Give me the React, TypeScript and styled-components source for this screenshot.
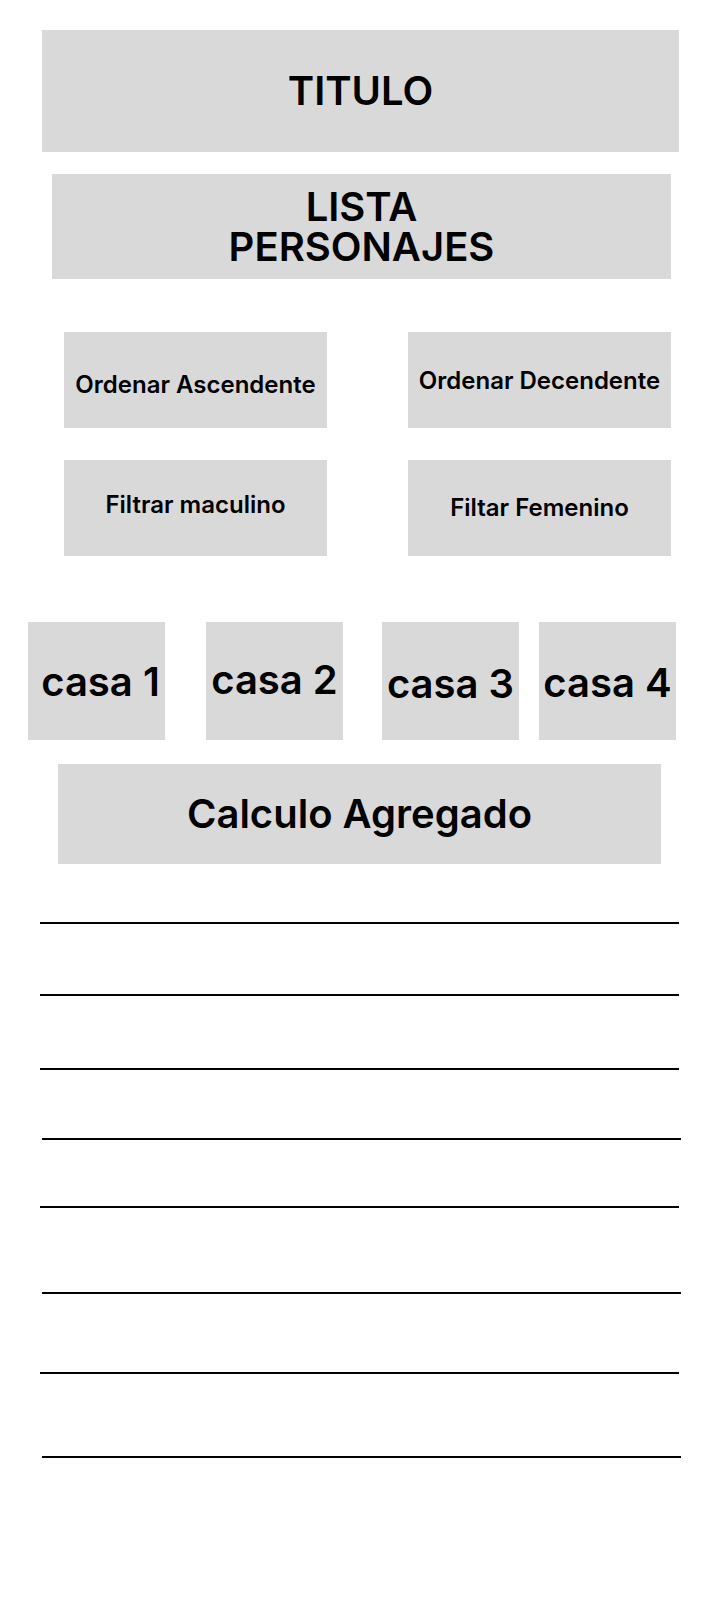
import React from "react";
import styled, { createGlobalStyle } from "styled-components";

const Global = createGlobalStyle`
  html, body { margin: 0; padding: 0; background: #ffffff; }
  body { font-family: Inter, "Noto Sans", sans-serif; color: #000; }
`;

const Page = styled.div`
  width: 720px;
  min-height: 1600px;
  display: flex;
  flex-direction: column;
  padding-top: 30px;
  box-sizing: border-box;
`;

const Panel = styled.div<{ $left: number; $width: number; $height: number; $top: number; $size: number; $shift?: number }>`
  margin-left: ${(p) => p.$left}px;
  margin-top: ${(p) => p.$top}px;
  width: ${(p) => p.$width}px;
  height: ${(p) => p.$height}px;
  background: #d9d9d9;
  display: flex;
  flex-direction: column;
  align-items: center;
  justify-content: center;
  text-align: center;
  font-family: Inter, "Noto Sans", sans-serif;
  font-weight: 600;
  font-size: ${(p) => p.$size}px;
  line-height: 1;
  white-space: nowrap;
  padding-top: ${(p) => Math.max(0, (p.$shift ?? 0) * 2)}px;
  padding-bottom: ${(p) => Math.max(0, -(p.$shift ?? 0) * 2)}px;
  box-sizing: border-box;
`;

const PanelLine = styled.span`
  display: block;
  line-height: 40px;
  height: 40px;
`;

const ButtonGrid = styled.div`
  margin-top: 53px;
  margin-left: 64px;
  display: grid;
  grid-template-columns: 263px 263px;
  grid-auto-rows: 96px;
  column-gap: 81px;
  row-gap: 32px;
`;

const ActionButton = styled.div<{ $shift?: number }>`
  background: #d9d9d9;
  display: flex;
  align-items: center;
  justify-content: center;
  font-family: Inter, "Noto Sans", sans-serif;
  font-weight: 600;
  font-size: 24px;
  line-height: 1;
  white-space: nowrap;
  padding-top: ${(p) => Math.max(0, (p.$shift ?? 0) * 2)}px;
  padding-bottom: ${(p) => Math.max(0, -(p.$shift ?? 0) * 2)}px;
  box-sizing: border-box;
`;

const HouseRow = styled.div`
  margin-top: 66px;
  display: flex;
  height: 118px;
`;

const House = styled.div<{ $gap: number; $shift?: number; $dx?: number }>`
  margin-left: ${(p) => p.$gap}px;
  width: 137px;
  height: 118px;
  background: #d9d9d9;
  display: flex;
  align-items: center;
  justify-content: center;
  font-family: Inter, "Noto Sans", sans-serif;
  font-weight: 600;
  font-size: 40px;
  line-height: 1;
  white-space: nowrap;
  padding-top: ${(p) => Math.max(0, (p.$shift ?? 0) * 2)}px;
  padding-bottom: ${(p) => Math.max(0, -(p.$shift ?? 0) * 2)}px;
  padding-left: ${(p) => Math.max(0, (p.$dx ?? 0) * 2)}px;
  box-sizing: border-box;
`;

const Lines = styled.div`
  display: flex;
  flex-direction: column;
`;

const Rule = styled.hr<{ $left: number; $top: number }>`
  margin: ${(p) => p.$top}px 0 0 ${(p) => p.$left}px;
  width: 639px;
  height: 2px;
  border: none;
  background: #000;
`;

const lines = [
  { top: 58, left: 40 },
  { top: 70, left: 40 },
  { top: 72, left: 40 },
  { top: 68, left: 42 },
  { top: 66, left: 40 },
  { top: 84, left: 42 },
  { top: 78, left: 40 },
  { top: 82, left: 42 },
];

export default function App() {
  return (
    <>
      <Global />
      <Page>
        <Panel $left={42} $width={637} $height={122} $top={0} $size={40}>
          TITULO
        </Panel>
        <Panel $left={52} $width={619} $height={105} $top={22} $size={40}>
          <PanelLine>LISTA</PanelLine>
          <PanelLine>PERSONAJES</PanelLine>
        </Panel>
        <ButtonGrid>
          <ActionButton $shift={5}>Ordenar Ascendente</ActionButton>
          <ActionButton $shift={1}>Ordenar Decendente</ActionButton>
          <ActionButton $shift={-3}>Filtrar maculino</ActionButton>
          <ActionButton $shift={0}>Filtar Femenino</ActionButton>
        </ButtonGrid>
        <HouseRow>
          <House $gap={28} $shift={1} $dx={4}>casa 1</House>
          <House $gap={41} $shift={-1}>casa 2</House>
          <House $gap={39} $shift={3}>casa 3</House>
          <House $gap={20} $shift={2}>casa 4</House>
        </HouseRow>
        <Panel $left={58} $width={603} $height={100} $top={24} $size={40}>
          Calculo Agregado
        </Panel>
        <Lines>
          {lines.map((l, i) => (
            <Rule key={i} $left={l.left} $top={l.top} />
          ))}
        </Lines>
      </Page>
    </>
  );
}
